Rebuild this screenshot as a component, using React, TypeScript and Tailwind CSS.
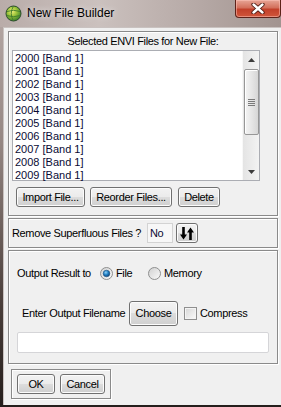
import { ReactNode } from "react"

const YEARS = ["2000", "2001", "2002", "2003", "2004", "2005", "2006", "2007", "2008", "2009"]

const btn =
  "flex items-center justify-center rounded-[3px] border border-[#707070] bg-[linear-gradient(to_bottom,#f2f2f2_0%,#ebebeb_49%,#dddddd_50%,#cfcfcf_100%)] shadow-[inset_0_0_0_1px_#fcfcfc] text-[11px] text-black leading-none"

const group = "border border-[#8a8a8a] shadow-[inset_1px_1px_0_#ffffff,1px_1px_0_#ffffff]"

function Btn({ className, children }: { className: string; children: ReactNode }) {
  return <div className={`${btn} ${className}`}>{children}</div>
}

function Radio({ checked }: { checked?: boolean }) {
  return (
    <svg width="13" height="13" viewBox="0 0 13 13" className="shrink-0">
      <defs>
        <linearGradient id="rbg" x1="0" y1="0" x2="1" y2="1">
          <stop offset="0" stopColor="#d0d0d0" />
          <stop offset="1" stopColor="#fbfbfb" />
        </linearGradient>
        <radialGradient id="rdot" cx="0.4" cy="0.35" r="0.7">
          <stop offset="0" stopColor="#8fd0f5" />
          <stop offset="0.5" stopColor="#1f7fc4" />
          <stop offset="1" stopColor="#0c3f73" />
        </radialGradient>
      </defs>
      <circle cx="6.5" cy="6.5" r="6" fill="url(#rbg)" stroke="#8e8f8f" />
      {checked && <circle cx="6.5" cy="6.5" r="3.3" fill="url(#rdot)" stroke="#1c4f7d" strokeWidth="0.6" />}
    </svg>
  )
}

function Scrollbar() {
  return (
    <div className="w-[17px] h-full flex flex-col items-center bg-[linear-gradient(to_right,#e4e4e4,#f3f3f3)] border-l border-[#f8f8f8]">
      <div className="h-[17px] w-full flex items-center justify-center">
        <svg width="7" height="4" viewBox="0 0 7 4">
          <path d="M3.5 0 L7 4 L0 4 Z" fill="#3c3c3c" />
        </svg>
      </div>
      <div className="mt-[1px] w-[15px] h-[66px] rounded-[2px] border border-[#979797] bg-[linear-gradient(to_right,#f4f4f4,#e6e6e6_50%,#d6d6d6)] shadow-[inset_1px_1px_0_#ffffff] flex flex-col items-center justify-center gap-[1px]">
        <div className="w-[7px] h-[1px] bg-[#7a7a7a]" />
        <div className="w-[7px] h-[1px] bg-[#7a7a7a]" />
        <div className="w-[7px] h-[1px] bg-[#7a7a7a]" />
        <div className="w-[7px] h-[1px] bg-[#7a7a7a]" />
      </div>
      <div className="flex-1" />
      <div className="h-[17px] w-full flex items-center justify-center">
        <svg width="7" height="4" viewBox="0 0 7 4">
          <path d="M0 0 L7 0 L3.5 4 Z" fill="#3c3c3c" />
        </svg>
      </div>
    </div>
  )
}

export default function App() {
  return (
    <div className="w-[281px] h-[407px] overflow-hidden flex flex-col bg-[linear-gradient(to_bottom,#b8aba8,#958783_35%,#4a3e3a_75%,#241e1c)] font-['Liberation_Sans',Arial,sans-serif] text-[11px] text-black">
      {/* title bar */}
      <div className="h-[27px] flex items-start bg-[linear-gradient(to_right,#b9aca9,#cbc1be_35%,#b6a9a6_70%,#a29490)]">
        <svg width="17" height="17" viewBox="0 0 17 17" className="ml-[5px] mt-[5px] shrink-0">
          <defs>
            <radialGradient id="globe" cx="0.4" cy="0.35" r="0.7">
              <stop offset="0" stopColor="#f2ee7a" />
              <stop offset="0.45" stopColor="#9cc43a" />
              <stop offset="1" stopColor="#2f7a2a" />
            </radialGradient>
          </defs>
          <circle cx="8.5" cy="8.5" r="7.5" fill="url(#globe)" stroke="#2b4a2c" />
          <path d="M2 6.5 Q8.5 4 15 6.5 M1.5 10.5 Q8.5 13 15.5 10.5 M8.5 1 Q4 8.5 8.5 16" fill="none" stroke="#3f7a2e" strokeWidth="0.9" />
        </svg>
        <span className="ml-[5px] leading-[27px] text-[12px] text-black [text-shadow:0_0_6px_rgba(255,255,255,0.8)]">New File Builder</span>
        <div className="ml-auto w-[46px] h-[18px] rounded-b-[4px] border border-t-0 border-[#5d2219] bg-[linear-gradient(to_bottom,#e7a596,#d3705c_45%,#c2402a_55%,#d0563b)] shadow-[inset_0_0_0_1px_rgba(255,200,190,0.5)] flex items-center justify-center">
          <svg width="14" height="11" viewBox="0 0 14 11">
            <path d="M2.5 1.5 L11.5 9.5 M11.5 1.5 L2.5 9.5" stroke="#4a1810" strokeWidth="4.2" strokeLinecap="round" />
            <path d="M2.5 1.5 L11.5 9.5 M11.5 1.5 L2.5 9.5" stroke="#ffffff" strokeWidth="2.4" strokeLinecap="round" />
          </svg>
        </div>
      </div>

      <div className="flex flex-1 min-h-0">
        <div className="w-[3px]" />
        {/* client area */}
        <div className="flex-1 flex flex-col bg-[#f0f0f0] border-l border-t border-[#c9c2c0] pl-[4px] pr-[3px] pt-[3px] tracking-[-0.35px]">
          {/* file list group */}
          <div className={`${group} h-[185px] flex flex-col`}>
            <div className="h-[18px] leading-[18px] text-center">Selected ENVI Files for New File:</div>
            <div className="ml-[3px] w-[248px] h-[131px] flex border border-[#abadb3] bg-white">
              <div className="flex-1 pl-[2px] pt-[1px] tracking-normal">
                {YEARS.map(y => (
                  <div key={y} className="h-[13px] leading-[13px] text-[#0a0a34] whitespace-nowrap">
                    {y} [Band 1]
                  </div>
                ))}
              </div>
              <Scrollbar />
            </div>
            <div className="mt-[6px] pl-[7px] flex">
              <Btn className="w-[69px] h-[20px]">Import File...</Btn>
              <Btn className="ml-[5px] w-[82px] h-[20px]">Reorder Files...</Btn>
              <Btn className="ml-[6px] w-[42px] h-[20px]">Delete</Btn>
            </div>
          </div>

          {/* remove superfluous group */}
          <div className={`${group} mt-[2px] h-[30px] flex items-center pl-[3px]`}>
            <span className="w-[135px] whitespace-nowrap">Remove Superfluous Files ?</span>
            <div className="w-[26px] h-[20px] border border-[#d3d3d3] bg-[#f7f7f7] pl-[2px] leading-[18px] text-[#0a0a34]">No</div>
            <div className={`${btn} ml-[3px] w-[22px] h-[20px]`}>
              <svg width="14" height="13" viewBox="0 0 14 13">
                <path d="M2.2 0 H4.8 V7.5 H7 L3.5 12.5 L0 7.5 H2.2 Z" fill="#000" />
                <path d="M9.2 13 H11.8 V5.5 H14 L10.5 0.5 L7 5.5 H9.2 Z" fill="#000" />
              </svg>
            </div>
          </div>

          {/* output group */}
          <div className={`${group} mt-[2px] h-[114px] flex flex-col`}>
            <div className="mt-[12px] h-[20px] pl-[8px] flex items-center">
              <span className="w-[83px] whitespace-nowrap">Output Result to</span>
              <Radio checked />
              <span className="ml-[3px] w-[32px]">File</span>
              <Radio />
              <span className="ml-[3px]">Memory</span>
            </div>
            <div className="mt-[18px] h-[25px] pl-[13px] flex items-center">
              <span className="w-[107px] whitespace-nowrap">Enter Output Filename</span>
              <Btn className="w-[49px] h-[25px]">Choose</Btn>
              <div className="ml-[6px] w-[13px] h-[13px] border border-[#8f8f8f] bg-[linear-gradient(135deg,#d6d6d6,#fbfbfb)] shadow-[inset_0_0_0_1px_#f4f4f4]" />
              <span className="ml-[3px]">Compress</span>
            </div>
            <div className="mt-[6px] mx-[8px] h-[21px] rounded-[2px] border border-[#d5d5d8] bg-white" />
          </div>

          {/* ok / cancel */}
          <div className={`${group} mt-[5px] ml-[3px] w-[100px] h-[30px] flex items-center pl-[5px]`}>
            <Btn className="w-[38px] h-[20px]">OK</Btn>
            <Btn className="ml-[5px] w-[45px] h-[20px]">Cancel</Btn>
          </div>
        </div>
      </div>
      <div className="h-[2px]" />
    </div>
  )
}
